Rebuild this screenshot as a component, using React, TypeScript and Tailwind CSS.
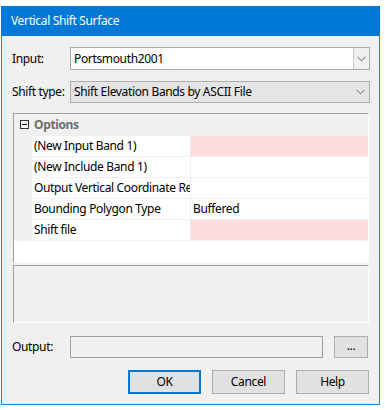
import React from 'react';

const font = { fontFamily: '"Noto Sans", "Open Sans", sans-serif' };

function Chevron() {
  return (
    <svg width="9" height="6" viewBox="0 0 9 6" className="block">
      <path d="M0.5 0.8 L4.5 4.8 L8.5 0.8" fill="none" stroke="#606060" strokeWidth="1" />
    </svg>
  );
}

const rows = [
  { name: '(New Input Band 1)', value: '', bad: true },
  { name: '(New Include Band 1)', value: '', bad: false },
  { name: 'Output Vertical Coordinate Reference', value: '', bad: false },
  { name: 'Bounding Polygon Type', value: 'Buffered', bad: false },
  { name: 'Shift file', value: '', bad: true },
];

export default function App() {
  return (
    <div className="w-[385px] h-[410px] bg-white pt-[6px] pl-[1px] text-[12px] tracking-[-0.35px] text-black" style={font}>
      <div className="w-[379px] h-[399px] border border-[#1883d7] border-t-0 bg-[#f0f0f0] flex flex-col">
        <div className="h-[30px] -mx-[1px] bg-[#0078d7] text-white flex items-center pl-[10px] leading-none">
          Vertical Shift Surface
        </div>

        <div className="flex flex-col pl-[10px] pr-[9px]">
          {/* Input */}
          <div className="flex items-center mt-[11px] h-[23px]">
            <div className="w-[58px] leading-none">Input:</div>
            <div className="w-[300px] h-[23px] border border-[#a9a9a9] bg-white flex items-center">
              <div className="flex-1 pl-[3px] leading-none">Portsmouth2001</div>
              <div className="w-[16px] h-full border-l border-[#c8c8c8] bg-[#f0f0f0] flex items-center justify-center">
                <Chevron />
              </div>
            </div>
          </div>

          {/* Shift type */}
          <div className="flex items-center mt-[11px] h-[22px]">
            <div className="w-[58px] leading-none">Shift type:</div>
            <div className="w-[300px] h-[22px] border border-[#adadad] bg-[#e5e5e5] flex items-center">
              <div className="flex-1 pl-[3px] leading-none">Shift Elevation Bands by ASCII File</div>
              <div className="w-[18px] flex items-center justify-center">
                <Chevron />
              </div>
            </div>
          </div>

          {/* Property grid */}
          <div className="mt-[10px] ml-[1px] w-[356px] h-[150px] border-t border-l border-[#a0a0a0] border-r border-b border-r-white border-b-white bg-white flex flex-col">
            <div className="h-[21px] bg-[#f0f0f0] flex items-center shrink-0">
              <div className="w-[18px] flex items-center justify-center pl-[3px]">
                <div className="w-[9px] h-[9px] border border-[#333] bg-white flex items-center justify-center">
                  <div className="w-[5px] h-[1px] bg-black" />
                </div>
              </div>
              <div className="pl-[2px] font-bold text-[#6d6d6d] leading-none">Options</div>
            </div>
            {rows.map((r) => (
              <div key={r.name} className="h-[21px] flex shrink-0 border-t border-[#f0f0f0]">
                <div className="w-[18px] bg-[#f0f0f0]" />
                <div className="w-[158px] overflow-hidden whitespace-nowrap flex items-center pl-[2px] leading-none">
                  {r.name}
                </div>
                <div className={`flex-1 border-l border-[#f0f0f0] flex items-center pl-[2px] leading-none ${r.bad ? 'bg-[#ffdcdc]' : 'bg-white'}`}>
                  {r.value}
                </div>
              </div>
            ))}
            <div className="flex-1 border-t border-[#f0f0f0]" />
          </div>

          {/* Description panel */}
          <div className="mt-[2px] ml-[1px] w-[356px] h-[58px] border-t border-l border-[#a0a0a0] border-r border-b border-r-white border-b-white" />

          {/* Output */}
          <div className="flex items-center mt-[13px] h-[22px]">
            <div className="w-[58px] leading-none">Output:</div>
            <div className="w-[253px] h-[22px] border border-[#a0a0a0] bg-[#f0f0f0]" />
            <div className="ml-[11px] w-[34px] h-[22px] border border-[#adadad] bg-[#e1e1e1] flex items-center justify-center leading-none pb-[3px]">
              ...
            </div>
          </div>

          {/* Buttons */}
          <div className="flex justify-end gap-[11px] mt-[12px] pr-[1px]">
            <div className="w-[73px] h-[24px] border-2 border-[#0078d7] bg-[#e1e1e1] flex items-center justify-center leading-none">OK</div>
            <div className="w-[73px] h-[24px] border border-[#adadad] bg-[#e1e1e1] flex items-center justify-center leading-none">Cancel</div>
            <div className="w-[73px] h-[24px] border border-[#adadad] bg-[#e1e1e1] flex items-center justify-center leading-none">Help</div>
          </div>
        </div>
      </div>
    </div>
  );
}
